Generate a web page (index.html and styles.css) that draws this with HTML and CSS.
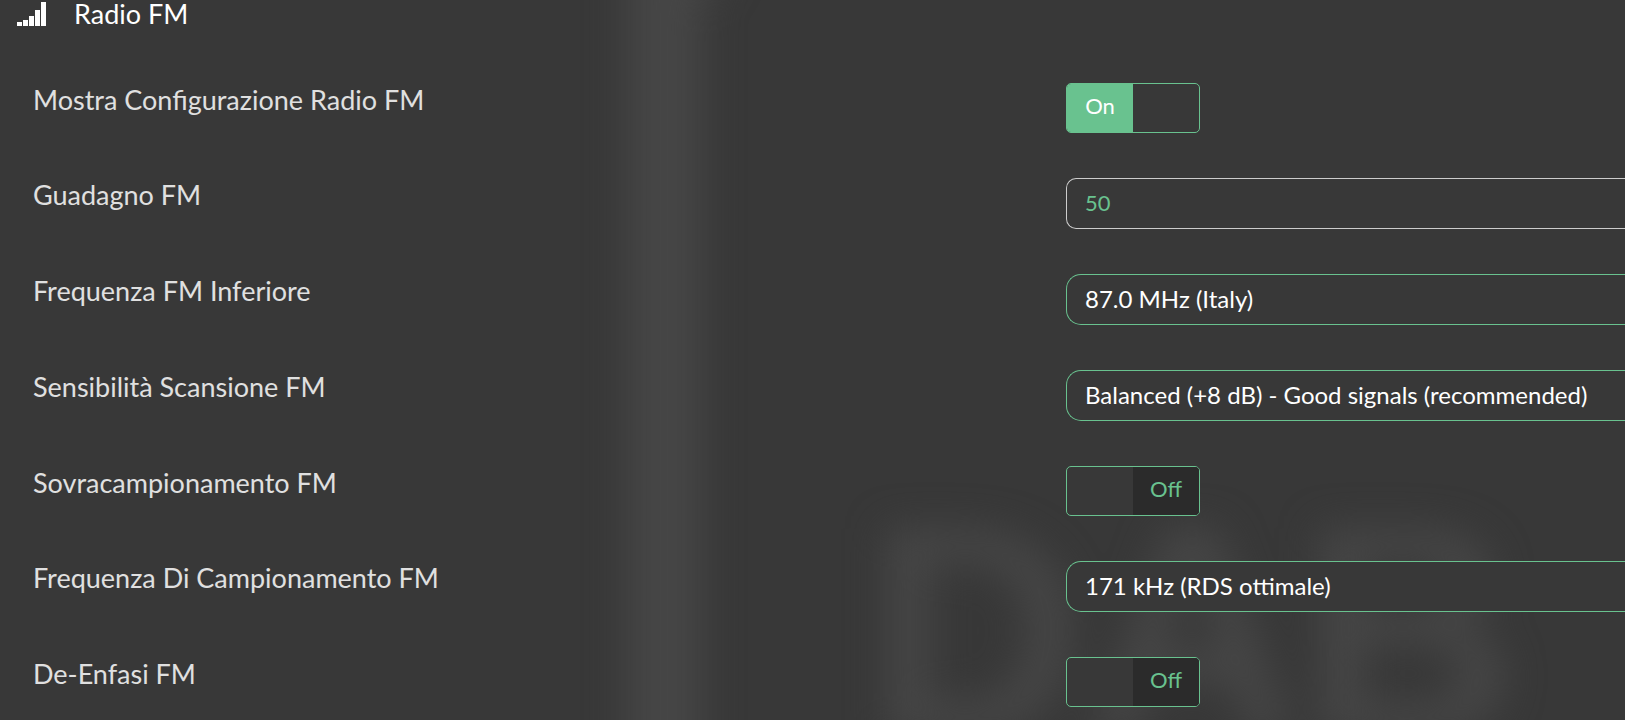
FILE: index.html
```html
<!DOCTYPE html>
<html lang="it">
<head>
<meta charset="utf-8">
<title>Radio FM</title>
<link rel="stylesheet" href="styles.css">
</head>
<body>
<svg class="backdrop" viewBox="0 0 1625 720" preserveAspectRatio="xMidYMid slice" aria-hidden="true">
  <defs>
    <filter id="soft" filterUnits="userSpaceOnUse" x="-100" y="-200" width="1900" height="1200" color-interpolation-filters="sRGB"><feGaussianBlur stdDeviation="19"/></filter>
  </defs>
  <g filter="url(#soft)">
    <path class="shape" d="M626 -150H752L722 -25Q702 -10 702 20V900H626Z"/>
    <text class="shape watermark" x="867" y="735">DAB</text>
  </g>
</svg>
<main class="panel">
  <h1 class="heading">
    <svg class="signal" viewBox="0 0 29 24" aria-hidden="true">
      <path d="M0 20h5v4H0zM6 18h5v6H6zM12 14h5v10h-5zM18 8h5v16h-5zM24 0h5v24h-5z"/>
    </svg>
    Radio FM
  </h1>
  <form class="settings">
    <div class="row">
      <label class="name" for="show">Mostra Configurazione Radio FM</label>
      <span class="toggle"><input type="checkbox" id="show" checked><span class="on">On</span><span class="off">Off</span></span>
    </div>
    <div class="row">
      <label class="name" for="gain">Guadagno FM</label>
      <input class="field" type="text" id="gain" value="50">
    </div>
    <div class="row">
      <label class="name" for="low">Frequenza FM Inferiore</label>
      <select class="field choice" id="low"><option>87.0 MHz (Italy)</option></select>
    </div>
    <div class="row">
      <label class="name" for="sens">Sensibilità Scansione FM</label>
      <select class="field choice" id="sens"><option>Balanced (+8 dB) - Good signals (recommended)</option></select>
    </div>
    <div class="row">
      <label class="name" for="over">Sovracampionamento FM</label>
      <span class="toggle"><input type="checkbox" id="over"><span class="on">On</span><span class="off">Off</span></span>
    </div>
    <div class="row">
      <label class="name" for="rate">Frequenza Di Campionamento FM</label>
      <select class="field choice" id="rate"><option>171 kHz (RDS ottimale)</option></select>
    </div>
    <div class="row">
      <label class="name" for="deemph">De-Enfasi FM</label>
      <span class="toggle"><input type="checkbox" id="deemph"><span class="on">On</span><span class="off">Off</span></span>
    </div>
  </form>
</main>
</body>
</html>
```
FILE: styles.css
```css
* {
  box-sizing: border-box;
}

body {
  margin: 0;
  min-height: 100vh;
  position: relative;
  overflow: hidden;
  background: #383838;
  color: #fff;
  font-family: Lato, "Open Sans", sans-serif;
}

.backdrop {
  position: absolute;
  inset: 0;
  width: 100%;
  height: 100%;
}

.shape {
  fill: #464646;
}

.watermark {
  font: bold 300px "Liberation Sans", Arial, sans-serif;
}

.panel {
  position: relative;
}

.heading {
  display: flex;
  align-items: center;
  gap: 28px;
  margin: 0;
  padding-left: 17px;
  font-size: 27px;
  font-weight: 400;
  line-height: 28px;
}

.signal {
  width: 29px;
  height: 24px;
  fill: #fff;
}

.settings {
  display: flex;
  flex-direction: column;
  gap: 45px;
  padding-top: 55px;
}

.row {
  display: grid;
  grid-template-columns: 65.6% 1fr;
  align-items: start;
}

.name {
  padding-left: 33px;
  color: #e0e0e0;
  font-size: 27px;
  line-height: 34px;
}

.field {
  width: 100%;
  height: 51px;
  margin: 0;
  padding: 0 18px 2px;
  border: 1px solid #ccc;
  border-right: 0;
  border-radius: 10px 0 0 10px;
  outline: 0;
  background: #383838;
  color: #69c28f;
  font-family: inherit;
  font-size: 22px;
}

.choice {
  appearance: none;
  border-color: #69c28f;
  border-radius: 15px 0 0 15px;
  color: #fff;
  font-size: 24px;
}

.toggle {
  position: relative;
  display: grid;
  grid-template-columns: 1fr 1fr;
  width: 134px;
  height: 50px;
  overflow: hidden;
  border: 1px solid #69c28f;
  border-radius: 5px;
  background: #383838;
  font-size: 22px;
  line-height: 44px;
  text-align: center;
}

.toggle input {
  position: absolute;
  inset: 0;
  width: 100%;
  height: 100%;
  margin: 0;
  opacity: 0;
  cursor: pointer;
}

.on {
  background: #69c28f;
}

.off {
  background: #2b2b2b;
  color: #69c28f;
}

.toggle input:checked ~ .off,
.toggle input:not(:checked) ~ .on {
  visibility: hidden;
}
```
